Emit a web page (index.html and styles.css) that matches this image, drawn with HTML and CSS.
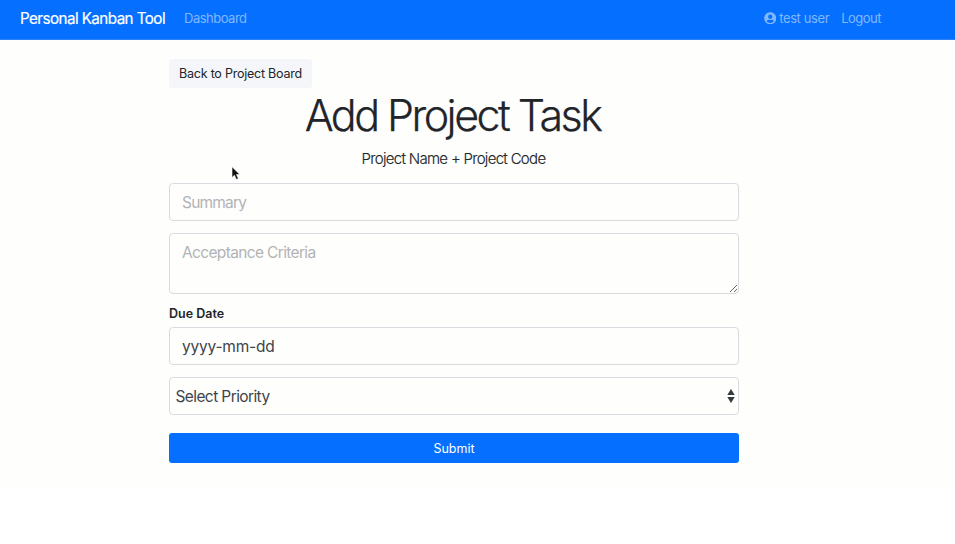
FILE: index.html
```html
<!DOCTYPE html>
<html lang="en">
<head>
<meta charset="utf-8">
<title>Personal Kanban Tool</title>
<link rel="stylesheet" href="styles.css">
</head>
<body>
<nav class="navbar">
  <a class="brand">Personal Kanban Tool</a>
  <a class="nav-link dashboard">Dashboard</a>
  <div class="nav-right">
    <a class="nav-link user"><svg class="user-icon" viewBox="0 0 496 512"><path fill="currentColor" d="M248 8C111 8 0 119 0 256s111 248 248 248 248-111 248-248S385 8 248 8zm0 96c48.600 0 88 39.400 88 88s-39.400 88-88 88-88-39.400-88-88 39.400-88 88-88zm0 344c-58.700 0-111.300-26.600-146.500-68.200 18.800-35.400 55.600-59.800 98.500-59.800 2.400 0 4.800.4 7.100 1.100 13 4.200 26.600 6.900 40.900 6.900 14.300 0 28-2.700 40.900-6.900 2.300-.7 4.700-1.100 7.100-1.100 42.900 0 79.700 24.400 98.500 59.800C359.300 421.400 306.700 448 248 448z"/></svg><span class="user-name">test user</span></a>
    <a class="nav-link logout">Logout</a>
  </div>
</nav>
<main class="page">
  <div class="container">
    <a class="back">Back to Project Board</a>
    <h1 class="title">Add Project Task</h1>
    <p class="lead">Project Name + Project Code</p>
    <form class="form">
      <input class="field summary" type="text" placeholder="Summary">
      <textarea class="field criteria" placeholder="Acceptance Criteria"></textarea>
      <label class="label">Due Date</label>
      <div class="field date"><span class="date-text">yyyy-mm-dd</span></div>
      <div class="field select"><span class="select-text">Select Priority</span><svg class="arrows" viewBox="0 0 8 14"><path fill="#343a40" d="M4 0 7.700 5.900H.3zM4 14 .3 8.100h7.400z"/></svg></div>
      <button class="submit" type="button"><span>Submit</span></button>
    </form>
  </div>
</main>
<svg class="cursor" viewBox="0 0 10 15"><path d="M1 .8v10.700l2.500-2.300 1.800 4.300 2-.9-1.800-4.100h3.300z" fill="#111" stroke="#fff" stroke-width=".6"/></svg>
</body>
</html>
```
FILE: styles.css
```css
* { box-sizing: border-box; }
body {
  margin: 0;
  height: 544px;
  overflow: hidden;
  background: #fff;
  color: #212529;
  font-family: Inter, "Liberation Sans", sans-serif;
}
.navbar {
  display: flex;
  align-items: center;
  height: 40px;
  padding: 0 74px 3px 20px;
  background: #0570ff;
  border-bottom: 1px solid #2c82f4;
}
.brand { position: relative; top: 1px; color: #fff; font-size: 15.2px; letter-spacing: -0.56px; line-height: 20px; -webkit-text-stroke: 0.2px; }
.nav-link { color: #80b8ff; font-size: 13px; letter-spacing: -0.5px; line-height: 20px; }
.dashboard { margin-left: 19px; }
.nav-right { display: flex; margin-left: auto; }
.user { display: flex; align-items: center; letter-spacing: -0.4px; }
.user-icon { width: 12.500px; height: 12.500px; margin-right: 3px; }
.logout { margin-left: 12px; }
.page { height: 449px; padding-top: 19px; background: #fefefd; }
.container { width: 570px; margin-left: 169px; }
.back {
  display: flex;
  align-items: center;
  justify-content: center;
  width: 143px;
  height: 29px;
  border-radius: 3px;
  background: #f5f6fa;
  font-size: 12.500px;
  letter-spacing: -0.23px;
}
.title {
  margin: 1px 0 0;
  padding-right: 3px;
  height: 52px;
  line-height: 52px;
  font-size: 43px;
  font-weight: 300;
  letter-spacing: -2.55px;
  text-align: center;
  -webkit-text-stroke: 0.25px;
}
.lead {
  margin: 7px 0 14px;
  padding-right: 1px;
  height: 21px;
  line-height: 21px;
  font-size: 15px;
  font-weight: 300;
  letter-spacing: -0.7px;
  text-align: center;
  -webkit-text-stroke: 0.15px;
}
.form { display: flex; flex-direction: column; }
.field {
  display: flex;
  align-items: center;
  width: 570px;
  height: 38px;
  margin: 0 0 12px;
  padding: 0 13px 0 12px;
  border: 1px solid #d8dbe0;
  border-radius: 4px;
  background: #fefefd;
  color: #3f444a;
  font: 400 15.500px/22px Inter, "Liberation Sans", sans-serif;
  letter-spacing: -0.2px;
}
.field::placeholder { color: #b2b3b5; opacity: 1; }
.summary { letter-spacing: -0.8px; }
.criteria { height: 61px; margin-bottom: 11px; padding-top: 8px; letter-spacing: -0.65px; }
.label { height: 18px; margin-bottom: 4px; line-height: 18px; font-size: 12.500px; font-weight: 600; }
.date { padding-top: 1px; }
.select { justify-content: space-between; padding: 1px 3px 0 5.500px; letter-spacing: -0.6px; }
.arrows { width: 8px; height: 14px; margin-bottom: 1px; }
.submit {
  height: 30px;
  margin-top: 6px;
  padding: 1px 0 0;
  border: 0;
  border-radius: 3px;
  background: #0570ff;
  color: #fff;
  font: 400 12.500px/29px Inter, "Liberation Sans", sans-serif;
}
.cursor { position: absolute; left: 231px; top: 166px; width: 10px; height: 15px; }
```
